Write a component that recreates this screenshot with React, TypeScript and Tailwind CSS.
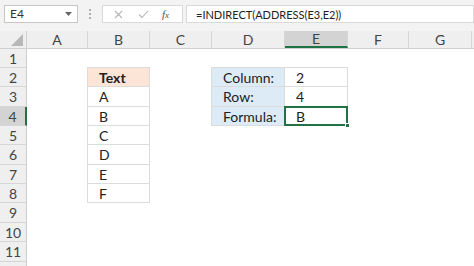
import React from "react";

const colW = [61, 62, 62, 73, 63, 61, 63, 60];
const cols = ["A", "B", "C", "D", "E", "F", "G", ""];
const rowH = [19, 19, 20, 19, 19, 20, 19, 19, 20, 19, 20, 19];

type CellSpec = { text?: string; cls?: string; bold?: boolean };

function cellFor(r: number, c: number): CellSpec | null {
  if (c === 1 && r >= 2 && r <= 8) {
    const vals = ["Text", "A", "B", "C", "D", "E", "F"];
    return {
      text: vals[r - 2],
      bold: r === 2,
      cls: r === 2 ? "bg-[#fce4d6]" : "bg-white",
    };
  }
  if (c === 3 && r >= 2 && r <= 4) {
    const vals = ["Column:", "Row:", "Formula:"];
    return { text: vals[r - 2], cls: "bg-[#ddebf7]" };
  }
  if (c === 4 && r >= 2 && r <= 4) {
    const vals = ["2", "4", "B"];
    return { text: vals[r - 2], cls: "bg-white" };
  }
  return null;
}

export default function App() {
  return (
    <div
      className="w-[474px] h-[266px] overflow-hidden bg-white relative"
      style={{ fontFamily: "Lato, 'Open Sans', sans-serif" }}
    >
      {/* Formula bar */}
      <div className="h-[31px] bg-[#f3f3f3] flex items-start pt-[5px]">
        <div className="ml-[4px] w-[74px] h-[18px] bg-white border border-[#c6c6c6] flex items-center justify-between pl-[5px] pr-[5px]">
          <span className="text-[12px] text-[#333] leading-none">E4</span>
          <svg width="7" height="4" viewBox="0 0 7 4">
            <path d="M0 0 L7 0 L3.5 4 Z" fill="#666" />
          </svg>
        </div>
        <div className="w-[24px] h-[18px] flex flex-col items-center justify-center gap-[2px]">
          <div className="w-[2px] h-[2px] bg-[#b0b0b0]" />
          <div className="w-[2px] h-[2px] bg-[#b0b0b0]" />
          <div className="w-[2px] h-[2px] bg-[#b0b0b0]" />
        </div>
        <div className="w-[81px] h-[18px] bg-white border border-[#dadada] flex items-center">
          <svg className="ml-[11px]" width="9" height="9" viewBox="0 0 9 9">
            <path d="M1 1 L8 8 M8 1 L1 8" stroke="#b5b5b5" strokeWidth="1.1" />
          </svg>
          <svg className="ml-[15px]" width="11" height="9" viewBox="0 0 11 9">
            <path d="M1 4.5 L4 7.5 L10 1" stroke="#b5b5b5" strokeWidth="1.1" fill="none" />
          </svg>
          <span
            className="ml-[13px] text-[11px] italic text-[#555] leading-none"
            style={{ fontFamily: "'Liberation Serif', serif" }}
          >
            f<span className="text-[9px]">x</span>
          </span>
        </div>
        <div className="ml-[3px] flex-1 h-[18px] bg-white border border-[#dadada] flex items-center pl-[9px]">
          <span className="text-[11px] text-[#222] leading-none">=INDIRECT(ADDRESS(E3,E2))</span>
        </div>
      </div>

      {/* Column headers */}
      <div className="flex h-[18px] bg-[#efefef] border-b border-[#cfcfcf]">
        <div className="w-[27px] shrink-0 relative border-r border-[#cfcfcf]">
          <svg className="absolute right-[3px] bottom-[2px]" width="12" height="12" viewBox="0 0 12 12">
            <path d="M12 0 L12 12 L0 12 Z" fill="#b8b8b8" />
          </svg>
        </div>
        {cols.map((c, i) => (
          <div
            key={i}
            style={{ width: colW[i] }}
            className={`shrink-0 flex items-center justify-center text-[14px] text-[#444] border-r border-[#d6d6d6] ${
              c === "E" ? "bg-[#d3d3d3] border-b-2 border-b-[#217346]" : ""
            }`}
          >
            {c}
          </div>
        ))}
      </div>

      {/* Rows */}
      {rowH.map((h, ri) => {
        const r = ri + 1;
        return (
          <div key={r} className="flex" style={{ height: h }}>
            <div
              className={`w-[27px] shrink-0 flex items-center justify-center text-[14px] text-[#444] border-b border-[#d6d6d6] ${
                r === 4
                  ? "bg-[#d3d3d3] border-r-2 border-r-[#217346]"
                  : "bg-[#efefef] border-r border-r-[#cfcfcf]"
              }`}
            >
              {r <= 11 ? r : ""}
            </div>
            {cols.map((_, ci) => {
              const spec = cellFor(r, ci);
              const selected = r === 4 && ci === 4;
              return (
                <div
                  key={ci}
                  style={{ width: colW[ci] }}
                  className="shrink-0 relative"
                >
                  {spec && (
                    <div
                      className={`absolute -mt-px -ml-px border border-[#dcdcdc] flex items-center pl-[11px] text-[14px] text-[#222] ${spec.cls} ${
                        spec.bold ? "font-bold" : ""
                      }`}
                      style={{ width: colW[ci] + 1, height: h + 1, top: 0, left: 0 }}
                    >
                      {spec.text}
                    </div>
                  )}
                  {selected && (
                    <div
                      className="absolute border-2 border-[#217346]"
                      style={{ left: -1, top: -1, width: colW[ci] + 1, height: h + 1 }}
                    >
                      <div className="absolute -right-[4px] -bottom-[4px] w-[5px] h-[5px] bg-[#217346] border border-white" />
                    </div>
                  )}
                </div>
              );
            })}
          </div>
        );
      })}
    </div>
  );
}
